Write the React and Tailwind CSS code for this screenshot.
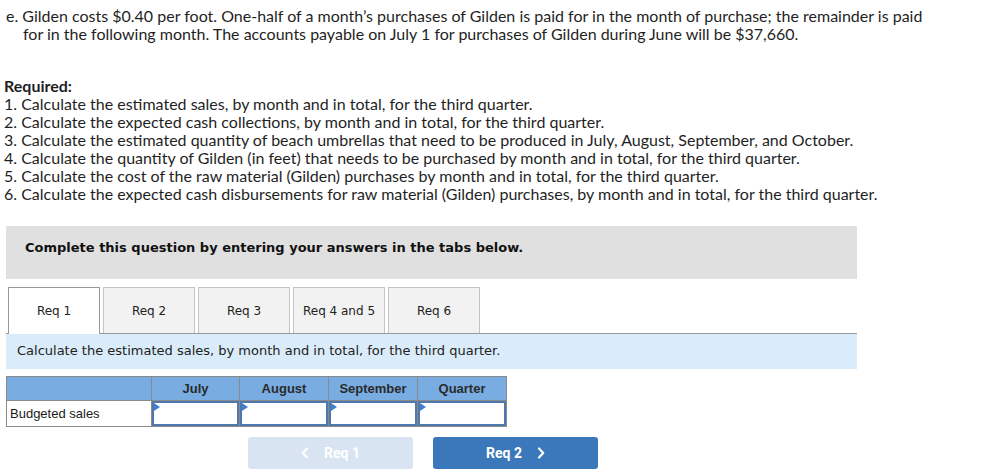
import React from "react";

const reqs = [
  "1. Calculate the estimated sales, by month and in total, for the third quarter.",
  "2. Calculate the expected cash collections, by month and in total, for the third quarter.",
  "3. Calculate the estimated quantity of beach umbrellas that need to be produced in July, August, September, and October.",
  "4. Calculate the quantity of Gilden (in feet) that needs to be purchased by month and in total, for the third quarter.",
  "5. Calculate the cost of the raw material (Gilden) purchases by month and in total, for the third quarter.",
  "6. Calculate the expected cash disbursements for raw material (Gilden) purchases, by month and in total, for the third quarter.",
];

const tabs = ["Req 1", "Req 2", "Req 3", "Req 4 and 5", "Req 6"];

function InputCell() {
  return (
    <td className="border border-[#8a8a8a] p-0 h-[26px]">
      <div className="relative h-[25px] border-2 border-[#4f79ad] bg-white">
        <div className="absolute left-0 top-0 w-0 h-0 border-t-[4px] border-b-[4px] border-l-[6px] border-t-transparent border-b-transparent border-l-[#3d7fd1]" />
      </div>
    </td>
  );
}

export default function App() {
  return (
    <div className="w-[994px] h-[476px] bg-white overflow-hidden text-[#222]">
      <div className="pt-[7px] pl-[23px] pr-[60px] -indent-[17px] text-[16px] leading-[18px] font-['Lato',sans-serif] text-[#1f1f1f]">
        e. Gilden costs $0.40 per foot. One-half of a month’s purchases of Gilden is paid for in the month of purchase; the remainder is paid for in the following month. The accounts payable on July 1 for purchases of Gilden during June will be $37,660.
      </div>

      <div className="mt-[34px] pl-[4px] text-[16px] leading-[18px] font-['Lato',sans-serif] text-[#1f1f1f]">
        <div className="font-bold">Required:</div>
        {reqs.map((r) => (
          <div key={r}>{r}</div>
        ))}
      </div>

      <div className="ml-[6px] w-[851px] mt-[23px]">
        <div className="h-[53px] bg-[#e0e0e0] pl-[19px] pt-[14px] text-[13px] leading-[16px] font-bold font-['DejaVu_Sans',sans-serif] text-[#111]">
          Complete this question by entering your answers in the tabs below.
        </div>

        <div className="mt-[8px] flex gap-[3px] pl-[2px] border-b border-[#999]">
          {tabs.map((t, i) => (
            <div
              key={t}
              className={
                i === 0
                  ? "w-[92px] h-[47px] -mb-px bg-white border border-b-0 border-[#999] flex items-center justify-center text-[12px] font-['DejaVu_Sans',sans-serif] text-[#222]"
                  : "w-[92px] h-[46px] bg-[#f2f2f2] border border-b-0 border-[#c4c4c4] flex items-center justify-center text-[12px] font-['DejaVu_Sans',sans-serif] text-[#222]"
              }
            >
              {t}
            </div>
          ))}
        </div>

        <div className="h-[35px] bg-[#daecf9] pl-[11px] flex items-center pb-[1px] text-[13px] font-['DejaVu_Sans',sans-serif] text-[#222]">
          Calculate the estimated sales, by month and in total, for the third quarter.
        </div>

        <table className="mt-[7px] border-collapse table-fixed w-[500px] font-['Liberation_Sans',sans-serif]">
          <colgroup>
            <col className="w-[145px]" />
            <col className="w-[88px]" />
            <col className="w-[89px]" />
            <col className="w-[89px]" />
            <col className="w-[89px]" />
          </colgroup>
          <thead>
            <tr className="bg-[#79ade2] h-[24px]">
              <th className="border border-[#8a8a8a] p-0"></th>
              {["July", "August", "September", "Quarter"].map((h) => (
                <th key={h} className="border border-[#8a8a8a] p-0 text-[13px] font-bold text-[#2a2a2a] text-center">
                  {h}
                </th>
              ))}
            </tr>
          </thead>
          <tbody>
            <tr>
              <td className="border border-[#8a8a8a] pl-[3px] text-[13px] text-[#1a1a1a] h-[26px]">Budgeted sales</td>
              <InputCell />
              <InputCell />
              <InputCell />
              <InputCell />
            </tr>
          </tbody>
        </table>

        <div className="mt-[10px] ml-[242px] flex gap-[20px] font-['Roboto',sans-serif]">
          <div className="w-[165px] h-[32px] rounded-[3px] bg-[#d8e4f2] flex items-center justify-center gap-[15px] text-white font-bold text-[14px]">
            <svg width="8" height="12" viewBox="0 0 8 12" fill="none" stroke="white" strokeWidth="2.2" strokeLinecap="round" strokeLinejoin="round">
              <path d="M6 1.5 L1.8 6 L6 10.5" />
            </svg>
            <span>Req 1</span>
          </div>
          <div className="w-[165px] h-[32px] rounded-[3px] bg-[#3a77bb] flex items-center justify-center gap-[15px] text-white font-bold text-[14px]">
            <span>Req 2</span>
            <svg width="8" height="12" viewBox="0 0 8 12" fill="none" stroke="white" strokeWidth="2.2" strokeLinecap="round" strokeLinejoin="round">
              <path d="M2 1.5 L6.2 6 L2 10.5" />
            </svg>
          </div>
        </div>
      </div>
    </div>
  );
}
